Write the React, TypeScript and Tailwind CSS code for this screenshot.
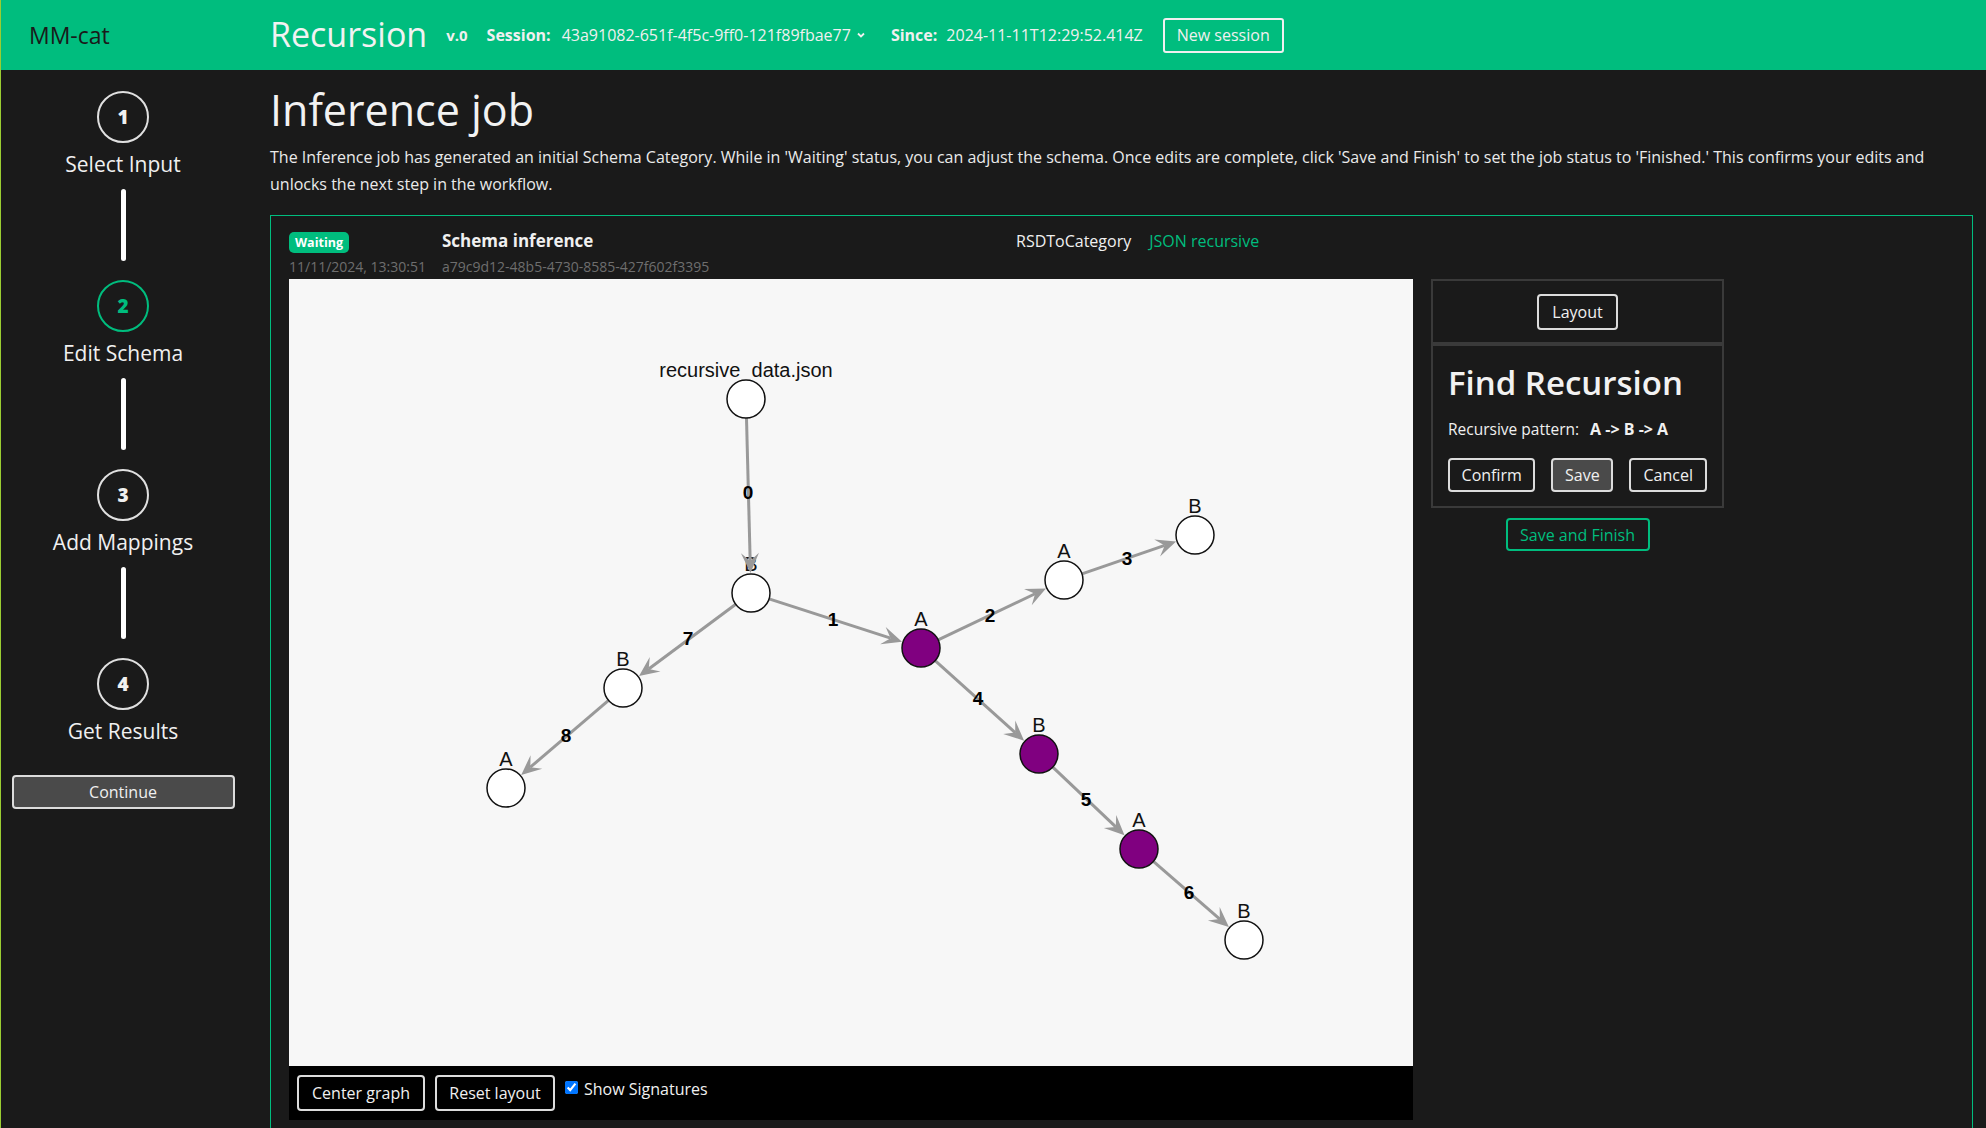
import React from "react";

type N = { x: number; y: number; label: string; purple?: boolean };

const nodes: Record<string, N> = {
  root: { x: 746, y: 399, label: "recursive_data.json" },
  b0: { x: 751, y: 593, label: "B" },
  a1: { x: 921, y: 648, label: "A", purple: true },
  a2: { x: 1064, y: 580, label: "A" },
  b3: { x: 1195, y: 535, label: "B" },
  b4: { x: 1039, y: 754, label: "B", purple: true },
  a5: { x: 1139, y: 849, label: "A", purple: true },
  b6: { x: 1244, y: 940, label: "B" },
  b7: { x: 623, y: 688, label: "B" },
  a8: { x: 506, y: 788, label: "A" },
};

const edges: { s: string; t: string; l: string; lx: number; ly: number }[] = [
  { s: "root", t: "b0", l: "0", lx: 748, ly: 492 },
  { s: "b0", t: "a1", l: "1", lx: 833, ly: 619 },
  { s: "a1", t: "a2", l: "2", lx: 990, ly: 615 },
  { s: "a2", t: "b3", l: "3", lx: 1127, ly: 558 },
  { s: "a1", t: "b4", l: "4", lx: 978, ly: 698 },
  { s: "b4", t: "a5", l: "5", lx: 1086, ly: 799 },
  { s: "a5", t: "b6", l: "6", lx: 1189, ly: 892 },
  { s: "b0", t: "b7", l: "7", lx: 688, ly: 638 },
  { s: "b7", t: "a8", l: "8", lx: 566, ly: 735 },
];

const R = 19;

function Edge({ s, t }: { s: N; t: N }) {
  const dx = t.x - s.x;
  const dy = t.y - s.y;
  const len = Math.hypot(dx, dy);
  const ux = dx / len;
  const uy = dy / len;
  const nx = -uy;
  const ny = ux;
  const sx = s.x + ux * R;
  const sy = s.y + uy * R;
  const tipX = t.x - ux * (R + 1);
  const tipY = t.y - uy * (R + 1);
  const L = 20;
  const W = 9;
  const notchX = tipX - ux * L * 0.6;
  const notchY = tipY - uy * L * 0.6;
  const b1x = tipX - ux * L + nx * W;
  const b1y = tipY - uy * L + ny * W;
  const b2x = tipX - ux * L - nx * W;
  const b2y = tipY - uy * L - ny * W;
  return (
    <g>
      <line x1={sx} y1={sy} x2={notchX} y2={notchY} stroke="#999999" strokeWidth={3} />
      <path d={`M${tipX},${tipY} L${b1x},${b1y} L${notchX},${notchY} L${b2x},${b2y} Z`} fill="#999999" />
    </g>
  );
}

function Graph() {
  return (
    <svg className="block w-[1124px] h-[787px]" viewBox="289 279 1124 787">
      <rect x={289} y={279} width={1124} height={787} fill="#f7f7f7" />
      {Object.entries(nodes).map(([k, n]) => (
        <text
          key={k + "l"}
          x={n.x}
          y={n.y - 22}
          textAnchor="middle"
          fontFamily="'Liberation Sans', Arial, sans-serif"
          fontSize={20}
          fill="#111"
        >
          {n.label}
        </text>
      ))}
      {edges.map((e, i) => (
        <Edge key={i} s={nodes[e.s]} t={nodes[e.t]} />
      ))}
      {Object.entries(nodes).map(([k, n]) => (
        <circle key={k} cx={n.x} cy={n.y} r={R} fill={n.purple ? "#800080" : "#ffffff"} stroke="#111" strokeWidth={1.5} />
      ))}
      {edges.map((e, i) => (
        <text
          key={"e" + i}
          x={e.lx}
          y={e.ly + 7}
          textAnchor="middle"
          fontFamily="'Liberation Sans', Arial, sans-serif"
          fontWeight="bold"
          fontSize={19}
          fill="#000"
        >
          {e.l}
        </text>
      ))}
    </svg>
  );
}

function Step({ n, label, active }: { n: number; label: string; active?: boolean }) {
  return (
    <div className="flex flex-col items-center">
      <div
        className={
          active
            ? "w-[52px] h-[52px] rounded-full border-2 border-[#00bd7e] text-[#00bd7e] flex items-center justify-center font-extrabold text-[19px]"
            : "w-[52px] h-[52px] rounded-full border-2 border-[#e0e0e0] text-[#f0f0f0] flex items-center justify-center font-extrabold text-[19px]"
        }
      >
        {n}
      </div>
      <div className="mt-[7px] text-[21px] leading-[28px] text-[#f0f0f0]">{label}</div>
    </div>
  );
}

function Line() {
  return <div className="mt-[11px] mb-[19px] w-[5px] h-[72px] rounded-full bg-white" />;
}

const btn =
  "border-2 border-[#dcdcdc] rounded-[4px] text-[16px] text-[#f0f0f0] flex items-center justify-center";

export default function App() {
  return (
    <div className="min-h-screen bg-[#1a1a1a] text-[#f0f0f0] border-l border-[#9acd32] font-['Open_Sans','Noto_Sans',sans-serif]">
      <header className="h-[70px] bg-[#00bd7e] flex items-center">
        <div className="w-[244px] pl-[28px] text-[23px] text-[#1a1a1a]">MM-cat</div>
        <div className="ml-[25px] flex items-center">
          <span className="text-[34px] leading-none text-[#f2f2f2] mb-[2px]">Recursion</span>
          <span className="ml-[19px] text-[15px] font-bold">v.0</span>
          <span className="ml-[19px] text-[16px] font-bold">Session:</span>
          <span className="ml-[11px] text-[16px]">43a91082-651f-4f5c-9ff0-121f89fbae77</span>
          <svg className="ml-[4px] w-[12px] h-[12px]" viewBox="0 0 12 12">
            <polyline points="3,4.5 6,7.5 9,4.5" fill="none" stroke="#f0f0f0" strokeWidth={1.8} />
          </svg>
          <span className="ml-[24px] text-[16px] font-bold">Since:</span>
          <span className="ml-[9px] text-[16px]">2024-11-11T12:29:52.414Z</span>
          <button className="ml-[20px] h-[35px] w-[121px] border-2 border-[#f0f0f0] rounded-[3px] text-[16px]">
            New session
          </button>
        </div>
      </header>
      <div className="flex">
        <aside className="w-[244px] shrink-0 flex flex-col items-center pt-[21px]">
          <Step n={1} label="Select Input" />
          <Line />
          <Step n={2} label="Edit Schema" active />
          <Line />
          <Step n={3} label="Add Mappings" />
          <Line />
          <Step n={4} label="Get Results" />
          <button className="mt-[30px] w-[223px] h-[34px] bg-[#4a4a4a] border-2 border-[#dcdcdc] rounded-[4px] text-[16px]">
            Continue
          </button>
        </aside>
        <main className="flex-1 pl-[25px] pr-[13px] pt-[14px]">
          <h1 className="text-[43px] leading-[52px] font-normal text-[#f2f2f2]">Inference job</h1>
          <p className="mt-[8px] text-[16px] leading-[27px] text-[#eaeaea]">
            The Inference job has generated an initial Schema Category. While in 'Waiting' status, you can adjust the
            schema. Once edits are complete, click 'Save and Finish' to set the job status to 'Finished.' This confirms
            your edits and
            <br />
            unlocks the next step in the workflow.
          </p>
          <div className="mt-[17px] border border-[#00bd7e] pl-[18px] pt-[14px] pb-[16px]">
            <div className="flex items-center h-[22px]">
              <div className="w-[153px]">
                <span className="inline-block bg-[#00bd7e] text-white font-bold text-[12.5px] leading-[21px] px-[6px] rounded-[5px]">
                  Waiting
                </span>
              </div>
              <div className="w-[574px] font-bold text-[17px]">Schema inference</div>
              <div className="text-[16px]">RSDToCategory</div>
              <div className="ml-[18px] text-[16px] text-[#00bd7e]">JSON recursive</div>
            </div>
            <div className="flex items-center h-[20px] mt-[4px] text-[14px] text-[#6e6e6e]">
              <div className="w-[153px]">11/11/2024, 13:30:51</div>
              <div>a79c9d12-48b5-4730-8585-427f602f3395</div>
            </div>
            <div className="flex items-start mt-[3px]">
              <div className="w-[1124px] shrink-0">
                <Graph />
                <div className="h-[54px] bg-black flex items-start pt-[9px] pl-[8px] gap-[10px]">
                  <button className={btn + " h-[36px] w-[128px] bg-black"}>Center graph</button>
                  <button className={btn + " h-[36px] w-[120px] bg-black"}>Reset layout</button>
                  <label className="flex items-start gap-[6px] text-[16px] leading-[20px] mt-[4px]">
                    <input type="checkbox" defaultChecked className="w-[13px] h-[13px] mt-[2px]" />
                    Show Signatures
                  </label>
                </div>
              </div>
              <div className="ml-[18px] w-[293px] shrink-0 flex flex-col items-center">
                <div className="w-full border-2 border-[#3a3a3a]">
                  <div className="flex justify-center pt-[13px] pb-[12px] border-b-4 border-[#3a3a3a]">
                    <button className={btn + " h-[36px] w-[81px]"}>Layout</button>
                  </div>
                  <div className="px-[15px] pt-[14px] pb-[14px]">
                    <div className="text-[33px] leading-[45px] font-semibold text-[#f2f2f2]">Find Recursion</div>
                    <div className="mt-[12px] text-[15.5px] leading-[24px]">
                      Recursive pattern:
                      <span className="ml-[11px] text-[16px] font-bold">A -&gt; B -&gt; A</span>
                    </div>
                    <div className="mt-[17px] flex gap-[16px]">
                      <button className={btn + " h-[34px] w-[89px]"}>Confirm</button>
                      <button className={btn + " h-[34px] w-[63px] bg-[#4a4a4a]"}>Save</button>
                      <button className={btn + " h-[34px] w-[79px]"}>Cancel</button>
                    </div>
                  </div>
                </div>
                <button className="mt-[10px] h-[33px] w-[144px] border-2 border-[#00bd7e] rounded-[4px] text-[#00bd7e] text-[16px]">
                  Save and Finish
                </button>
              </div>
            </div>
          </div>
        </main>
      </div>
    </div>
  );
}
